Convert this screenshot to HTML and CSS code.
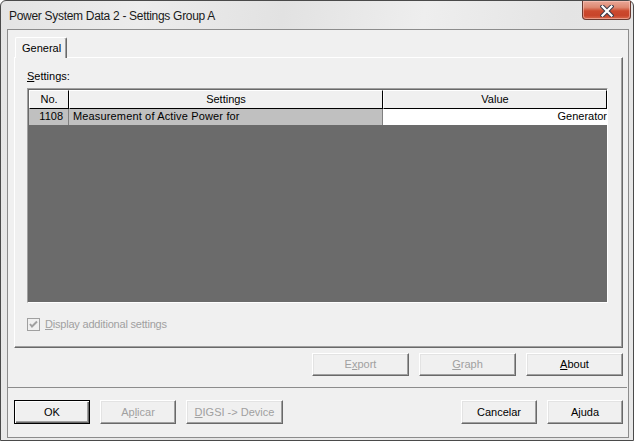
FILE: index.html
```html
<!DOCTYPE html>
<html>
<head>
<meta charset="utf-8">
<link rel="stylesheet" href="styles.css">
</head>
<body>
<div class="window">
  <div class="titlebar">
    <span class="title">Power System Data 2 - Settings Group A</span>
    <div class="close">
      <svg width="14" height="12" viewBox="0 0 14 12">
        <path d="M2.5 1.5 L11.5 10.5 M11.5 1.5 L2.5 10.5" stroke="#3b3b4a" stroke-width="4.2" stroke-linecap="square"/>
        <path d="M2.5 1.5 L11.5 10.5 M11.5 1.5 L2.5 10.5" stroke="#ffffff" stroke-width="2.2" stroke-linecap="square"/>
      </svg>
    </div>
  </div>
  <div class="client">
    <div class="tabstrip"><div class="tab">General</div></div>
    <div class="panel">
      <div class="label"><u>S</u>ettings:</div>
      <div class="grid">
        <div class="row head">
          <div class="cell c-no">No.</div>
          <div class="cell c-set">Settings</div>
          <div class="cell c-val">Value</div>
        </div>
        <div class="row data">
          <div class="cell c-no">1108</div>
          <div class="cell c-set">Measurement of Active Power for</div>
          <div class="cell c-val">Generator</div>
        </div>
      </div>
      <div class="check">
        <svg class="box" width="13" height="13" viewBox="0 0 13 13">
          <rect x="0.5" y="0.5" width="12" height="12" fill="#f0f0f0" stroke="#a0a0a0"/>
          <path d="M3 6 L5 8.5 L10 3.5" fill="none" stroke="#a0a0a0" stroke-width="2"/>
        </svg>
        <span class="check-text"><u>D</u>isplay additional settings</span>
      </div>
    </div>
    <div class="actions">
      <div class="btn disabled">E<u>x</u>port</div>
      <div class="btn disabled"><u>G</u>raph</div>
      <div class="btn"><u>A</u>bout</div>
    </div>
    <div class="sep"></div>
    <div class="footer">
      <div class="btn small default">OK</div>
      <div class="btn small disabled">Ap<u>l</u>icar</div>
      <div class="btn disabled"><u>D</u>IGSI -&gt; Device</div>
      <div class="spacer"></div>
      <div class="btn small">Cancelar</div>
      <div class="btn small">Ajuda</div>
    </div>
  </div>
</div>
</body>
</html>
```

FILE: styles.css
```css
html, body {
  margin: 0;
  padding: 0;
  background: #ffffff;
}

.window {
  box-sizing: border-box;
  width: 634px;
  height: 441px;
  border: 1px solid #4a4a4a;
  border-radius: 6px 6px 0 0;
  background: linear-gradient(100deg, #e4e4e4 0%, #ececec 20%, #e2e2e2 40%, #eeeeee 60%, #e4e4e4 80%, #e8e8e8 100%);
  padding: 0 4px 2px 6px;
  display: flex;
  flex-direction: column;
  font-family: "Liberation Sans", Arial, sans-serif;
  font-size: 11px;
  color: #000;
}

.titlebar {
  height: 28px;
  display: flex;
  align-items: flex-start;
}

.title {
  font-family: "Liberation Sans", Arial, sans-serif;
  font-size: 12px;
  letter-spacing: -0.3px;
  color: #1a1a1a;
  margin-left: 2px;
  margin-top: 7px;
  line-height: 16px;
}

.close {
  margin-left: auto;
  margin-right: -2px;
  width: 49px;
  height: 19px;
  box-sizing: border-box;
  border: 1px solid #6b3a30;
  border-top: none;
  border-radius: 0 0 4px 4px;
  background: linear-gradient(#e9a797 0%, #de8a73 35%, #cc4a2e 55%, #c8442a 80%, #d8694c 100%);
  box-shadow: inset 0 0 0 1px rgba(255, 210, 200, 0.5);
  display: flex;
  align-items: center;
  justify-content: center;
}

.close svg {
  margin-top: 1px;
}

.client {
  box-sizing: border-box;
  width: 622px;
  height: 409px;
  border: 1px solid #8c8c8c;
  background: #f0f0f0;
  display: flex;
  flex-direction: column;
}

.tabstrip {
  display: flex;
  padding: 7px 0 0 7px;
  height: 20px;
}

.tab {
  position: relative;
  z-index: 1;
  box-sizing: border-box;
  width: 52px;
  height: 21px;
  background: #f0f0f0;
  border-top: 1px solid #ffffff;
  border-left: 1px solid #ffffff;
  border-right: 1px solid #696969;
  box-shadow: inset -1px 0 0 #a0a0a0;
  border-radius: 2px 2px 0 0;
  padding: 4px 0 0 6px;
  line-height: 13px;
}

.panel {
  box-sizing: border-box;
  margin-left: 6px;
  width: 609px;
  height: 291px;
  border-top: 1px solid #ffffff;
  border-left: 1px solid #ffffff;
  border-right: 1px solid #696969;
  border-bottom: 1px solid #696969;
  box-shadow: inset -1px -1px 0 #a0a0a0;
  padding: 10px 0 0 12px;
  display: flex;
  flex-direction: column;
}

.label {
  height: 20px;
  line-height: 14px;
  padding-top: 1px;
  box-sizing: border-box;
}

.grid {
  box-sizing: border-box;
  width: 581px;
  height: 215px;
  border-top: 1px solid #a0a0a0;
  border-left: 1px solid #a0a0a0;
  border-right: 1px solid #ffffff;
  border-bottom: 1px solid #ffffff;
  box-shadow: inset 1px 1px 0 #696969;
  padding: 1px 0 0 1px;
  background: #6b6b6b;
  display: flex;
  flex-direction: column;
}

.row {
  display: flex;
}

.cell {
  box-sizing: border-box;
  white-space: nowrap;
  overflow: hidden;
}

.c-no { width: 40px; }
.c-set { width: 314px; }
.c-val { width: 224px; }

.head .cell {
  height: 19px;
  background: #f0f0f0;
  border-top: 1px solid #ffffff;
  border-left: 1px solid #ffffff;
  border-bottom: 1px solid #000000;
  border-right: 1px solid #000000;
  text-align: center;
  line-height: 16px;
}

.data .cell {
  height: 16px;
  line-height: 15px;
  background: #c0c0c0;
  border-right: 1px solid #808080;
}

.data .c-no {
  text-align: right;
  padding-right: 5px;
}

.data .c-set {
  padding-left: 4px;
  letter-spacing: 0.15px;
}

.data .c-val {
  background: #ffffff;
  border-right: none;
  text-align: right;
}

.check {
  display: flex;
  align-items: center;
  margin-top: 15px;
  height: 13px;
  color: #a0a0a0;
}

.check .box {
  display: block;
}

.check-text {
  margin-left: 5px;
  line-height: 13px;
  letter-spacing: -0.2px;
}

.actions {
  display: flex;
  justify-content: flex-end;
  gap: 10px;
  margin: 5px 5px 0 0;
}

.btn {
  box-sizing: border-box;
  width: 97px;
  height: 23px;
  background: #f0f0f0;
  border-top: 1px solid #ffffff;
  border-left: 1px solid #ffffff;
  border-right: 1px solid #696969;
  border-bottom: 1px solid #696969;
  box-shadow: inset -1px -1px 0 #a0a0a0, inset 1px 1px 0 #e3e3e3;
  display: flex;
  align-items: center;
  justify-content: center;
  line-height: 13px;
}

.btn.small {
  width: 76px;
}

.btn.disabled {
  color: #a0a0a0;
}

.btn.default {
  border: 1px solid #000000;
  box-shadow: inset 1px 1px 0 #ffffff, inset -1px -1px 0 #696969, inset -2px -2px 0 #a0a0a0;
}

.sep {
  height: 1px;
  background: #8c8c8c;
  margin: 11px 1px 0 0;
}

.footer {
  display: flex;
  gap: 10px;
  margin: 12px 5px 0 6px;
}

.footer .btn {
  height: 24px;
}

.spacer {
  flex: 1;
}
```
